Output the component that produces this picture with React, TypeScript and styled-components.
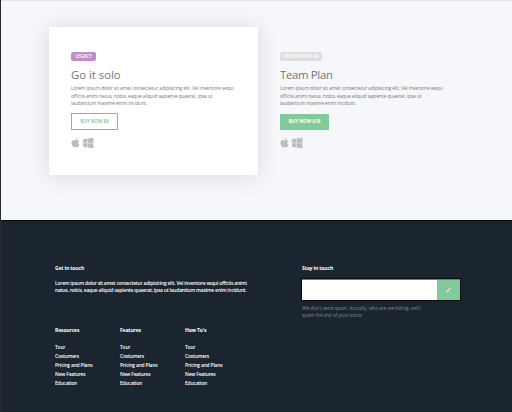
import React from "react";
import styled, { createGlobalStyle } from "styled-components";
import { FaApple, FaWindows } from "react-icons/fa";

const GlobalStyle = createGlobalStyle`
  * { box-sizing: border-box; }
  body { margin: 0; font-family: "Open Sans", "Noto Sans", sans-serif; }
  h2, h3, p, ul { margin: 0; padding: 0; font-weight: 400; }
`;

const Page = styled.div`
  width: 512px;
  height: 412px;
  overflow: hidden;
  border-left: 1px solid #29292d;
  display: flex;
  flex-direction: column;
`;

const Pricing = styled.section`
  height: 220px;
  flex: none;
  padding: 26px 0 0 48px;
  border-top: 1px solid #e3e4e6;
  background: #f6f7fb;
  display: flex;
`;

const Plan = styled.article<{ $raised?: boolean }>`
  width: 209px;
  height: 148px;
  padding: 25px 0 0 22px;
  background: ${(p) => (p.$raised ? "#fff" : "transparent")};
  box-shadow: ${(p) => (p.$raised ? "0 1px 20px rgba(40, 44, 60, 0.14)" : "none")};
  display: flex;
  flex-direction: column;
  align-items: flex-start;
`;

const Badge = styled.span<{ $color: string; $width: number; $ink: string }>`
  width: ${(p) => p.$width}px;
  height: 9px;
  border-radius: 2px;
  background: ${(p) => p.$color};
  color: ${(p) => p.$ink};
  font-size: 4.7px;
  font-weight: 600;
  letter-spacing: -0.12px;
  line-height: 9px;
  text-align: center;
  white-space: nowrap;
`;

const PlanTitle = styled.h2<{ $tracking: number }>`
  margin-top: 6px;
  height: 16px;
  font-size: 11.3px;
  letter-spacing: ${(p) => p.$tracking}px;
  line-height: 16px;
  color: #747474;
  white-space: nowrap;
`;

const PlanText = styled.p`
  margin-top: 2px;
  font-size: 4.9px;
  letter-spacing: -0.11px;
  line-height: 7.5px;
  color: #777;
  white-space: nowrap;
`;

const BuyButton = styled.button<{ $solid?: boolean }>`
  width: ${(p) => (p.$solid ? 49 : 47)}px;
  height: ${(p) => (p.$solid ? 16 : 17)}px;
  margin: ${(p) => (p.$solid ? 6 : 5)}px 0 8px;
  padding: 0;
  border: ${(p) => (p.$solid ? "none" : "1px solid #a5a5a5")};
  background: ${(p) => (p.$solid ? "#82ca9a" : "#fff")};
  color: ${(p) => (p.$solid ? "#fff" : "#6fc28c")};
  font: ${(p) => (p.$solid ? 700 : 600)} 4.6px/15px "Open Sans", sans-serif;
  text-align: center;
  white-space: nowrap;
`;

const Platforms = styled.div`
  display: flex;
  align-items: center;
  gap: 3px;
  height: 10px;
  color: #bdbdbd;
`;

const AppleIcon = styled(FaApple)`
  width: 9px;
  height: 11px;
`;

const WindowsIcon = styled(FaWindows)`
  width: 10.5px;
  height: 12px;
`;

const Footer = styled.footer`
  flex: 1;
  padding: 43px 0 0 54px;
  border-top: 1px solid #080b10;
  background: #1b2530;
  color: #fff;
  display: flex;
`;

const About = styled.div`
  width: 247px;
`;

const FooterTitle = styled.h3`
  height: 8px;
  font-size: 5px;
  letter-spacing: -0.12px;
  line-height: 8px;
  font-weight: 700;
  white-space: nowrap;
`;

const FooterText = styled.p`
  margin-top: 7.5px;
  font-size: 4.9px;
  letter-spacing: -0.19px;
  line-height: 7.3px;
  font-weight: 600;
  white-space: nowrap;
`;

const LinkColumns = styled.div`
  margin-top: 32px;
  display: grid;
  grid-template-columns: repeat(3, 65px);
`;

const LinkList = styled.ul`
  margin-top: 9px;
  list-style: none;
  font-size: 4.9px;
  letter-spacing: -0.17px;
  line-height: 9px;
  font-weight: 600;
  white-space: nowrap;
`;

const Contact = styled.div`
  width: 158px;
`;

const Signup = styled.form`
  width: 158px;
  height: 21px;
  margin-top: 7px;
  display: flex;
  border-top: 1px solid #777b80;
  outline: 1px solid #0a0d13;
`;

const EmailInput = styled.input`
  width: 135px;
  height: 20px;
  padding: 0 6px;
  border: 0;
  background: #fff;
`;

const SubmitButton = styled.button`
  width: 23px;
  height: 20px;
  padding: 0;
  border: 0;
  background: #82ca9a;
  color: #fff;
  font: 8px/19px "DejaVu Sans", sans-serif;
`;

const Note = styled.p`
  margin-top: 5px;
  font-size: 4.9px;
  letter-spacing: -0.09px;
  line-height: 7px;
  color: #81868b;
  white-space: nowrap;
`;

const links = ["Tour", "Costumers", "Pricing and Plans", "New Features", "Education"];

function PlatformIcons() {
  return (
    <Platforms>
      <AppleIcon />
      <WindowsIcon />
    </Platforms>
  );
}

function Description() {
  return (
    <PlanText>
      Lorem ipsum dolor sit amet consectetur adipisicing elit. Vel inventore sequi<br />
      officiis animi natus, nobis, eaque aliquid sapiente quaerat, ipsa ut<br />
      laudantium maxime enim incidunt.
    </PlanText>
  );
}

export default function App() {
  return (
    <>
      <GlobalStyle />
      <Page>
        <Pricing>
          <Plan $raised>
            <Badge $color="#c18bc6" $ink="#fff" $width={25}>LEGACY</Badge>
            <PlanTitle $tracking={0}>Go it solo</PlanTitle>
            <Description />
            <BuyButton>BUY NOW $9</BuyButton>
            <PlatformIcons />
          </Plan>
          <Plan>
            <Badge $color="#dedede" $ink="#fff" $width={42}>MOST POPULAR</Badge>
            <PlanTitle $tracking={-0.28}>Team Plan</PlanTitle>
            <Description />
            <BuyButton $solid>BUY NOW $18</BuyButton>
            <PlatformIcons />
          </Plan>
        </Pricing>
        <Footer>
          <About>
            <FooterTitle>Get in touch</FooterTitle>
            <FooterText>
              Lorem ipsum dolor sit amet consectetur adipisicing elit. Vel inventore sequi officiis animi<br />
              natus, nobis, eaque aliquid sapiente quaerat, ipsa ut laudantium maxime enim incidunt.
            </FooterText>
            <LinkColumns>
              {["Resources", "Features", "How To's"].map((title) => (
                <div key={title}>
                  <FooterTitle>{title}</FooterTitle>
                  <LinkList>
                    {links.map((link) => <li key={link}>{link}</li>)}
                  </LinkList>
                </div>
              ))}
            </LinkColumns>
          </About>
          <Contact>
            <FooterTitle>Stay in touch</FooterTitle>
            <Signup>
              <EmailInput aria-label="Email" />
              <SubmitButton type="button">✓</SubmitButton>
            </Signup>
            <Note>
              We don't send spam. Actually, who are we kiding, we'll<br />
              spam the shit of your inbox
            </Note>
          </Contact>
        </Footer>
      </Page>
    </>
  );
}
